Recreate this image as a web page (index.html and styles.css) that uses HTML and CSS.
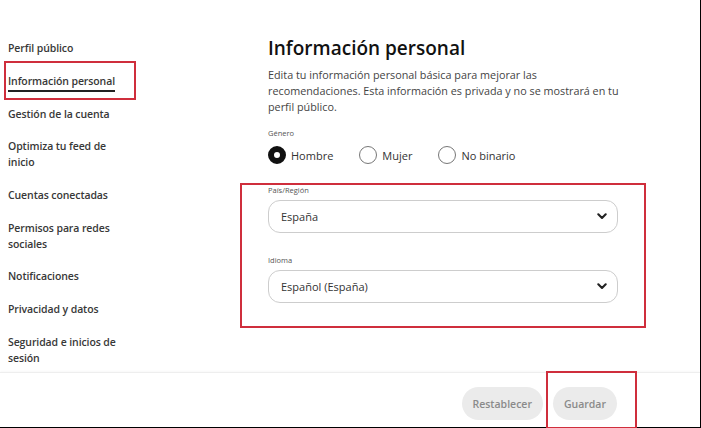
FILE: index.html
```html
<!DOCTYPE html>
<html lang="es">
<head>
<meta charset="utf-8">
<title>Información personal</title>
<link rel="stylesheet" href="styles.css">
</head>
<body>
<div class="page">
  <div class="top">
    <nav class="sidebar">
      <a class="nav-item">Perfil público</a>
      <a class="nav-item active"><span>Información personal</span></a>
      <a class="nav-item">Gestión de la cuenta</a>
      <a class="nav-item">Optimiza tu feed de inicio</a>
      <a class="nav-item">Cuentas conectadas</a>
      <a class="nav-item">Permisos para redes sociales</a>
      <a class="nav-item">Notificaciones</a>
      <a class="nav-item">Privacidad y datos</a>
      <a class="nav-item">Seguridad e inicios de sesión</a>
    </nav>
    <main class="content">
      <h1 class="title">Información personal</h1>
      <p class="intro">Edita tu información personal básica para mejorar las<br>recomendaciones. Esta información es privada y no se mostrará en tu<br>perfil público.</p>
      <div class="field-label">Género</div>
      <div class="radios">
        <label class="radio"><span class="dot checked"></span>Hombre</label>
        <label class="radio"><span class="dot"></span>Mujer</label>
        <label class="radio"><span class="dot"></span>No binario</label>
      </div>
      <div class="selects">
        <div class="field-label sel-label">País/Región</div>
        <div class="select">
          <span>España</span>
          <svg class="chev" width="10" height="7" viewBox="0 0 10 7"><path d="M1.3 1.3 L5 5 L8.7 1.3" fill="none" stroke="#222" stroke-width="2.1" stroke-linecap="round" stroke-linejoin="round"/></svg>
        </div>
        <div class="field-label sel-label second">Idioma</div>
        <div class="select">
          <span>Español (España)</span>
          <svg class="chev" width="10" height="7" viewBox="0 0 10 7"><path d="M1.3 1.3 L5 5 L8.7 1.3" fill="none" stroke="#222" stroke-width="2.1" stroke-linecap="round" stroke-linejoin="round"/></svg>
        </div>
      </div>
    </main>
  </div>
  <footer class="footer">
    <button class="btn">Restablecer</button>
    <button class="btn">Guardar</button>
  </footer>
  <div class="mark mark-nav"></div>
  <div class="mark mark-selects"></div>
  <div class="mark mark-save"></div>
</div>
</body>
</html>
```

FILE: styles.css
```css
* { box-sizing: border-box; }
html, body { margin: 0; padding: 0; background: #fff; }
body {
  font-family: "Open Sans", "Noto Sans", sans-serif;
  color: #333;
  width: 701px;
  height: 428px;
  overflow: hidden;
}
.page {
  position: relative;
  width: 701px;
  height: 428px;
  border-right: 1px solid #000;
  border-bottom: 1px solid #000;
}
.top {
  display: flex;
  height: 372px;
}
.sidebar {
  width: 268px;
  padding: 32px 0 0 8px;
  display: flex;
  flex-direction: column;
}
.nav-item {
  display: block;
  width: 118px;
  font-size: 10.5px;
  line-height: 16px;
  padding: 8.35px 0;
  color: #383838;
  font-weight: 600;
  letter-spacing: -0.1px;
}
.nav-item.active span {
  border-bottom: 2px solid #222;
  padding-bottom: 2px;
}
.content {
  width: 360px;
  padding-top: 36px;
}
.title {
  margin: 0;
  font-size: 19px;
  line-height: 24px;
  font-weight: 600;
  color: #111;
}
.intro {
  margin: 7px 0 0;
  font-size: 10.8px;
  line-height: 16px;
  color: #444;
  white-space: nowrap;
}
.field-label {
  font-size: 7.5px;
  line-height: 10px;
  color: #555;
  margin-top: 13px;
}
.radios {
  display: flex;
  align-items: center;
  margin-top: 8px;
  height: 18px;
}
.radio {
  display: flex;
  align-items: center;
  font-size: 11px;
  color: #333;
  margin-right: 26px;
}
.radio .dot {
  width: 18px;
  height: 18px;
  border-radius: 50%;
  border: 1.5px solid #777;
  margin-right: 5px;
  background: #fff;
}
.radio .dot.checked {
  border: 6px solid #111;
}
.selects {
  margin-top: 21px;
}
.sel-label { margin-top: 0; }
.sel-label.second { margin-top: 22px; }
.select {
  margin-top: 5px;
  width: 350px;
  height: 33px;
  border: 1px solid #cdcdcd;
  border-radius: 12px;
  display: flex;
  align-items: center;
  justify-content: space-between;
  padding: 0 10px 0 12px;
  font-size: 11px;
  color: #333;
}
.chev { display: block; }
.footer {
  height: 55px;
  border-top: 1px solid #eee;
  box-shadow: 0 -1px 2px rgba(0,0,0,0.03);
  display: flex;
  justify-content: flex-end;
  align-items: flex-start;
  gap: 10px;
  padding: 14px 83px 0 0;
}
.btn {
  height: 33px;
  border: none;
  border-radius: 17px;
  background: #ebebeb;
  color: #8a8a8a;
  font-family: "Open Sans", "Noto Sans", sans-serif;
  font-weight: 600;
  font-size: 10.5px;
  padding: 0 11px;
}
.mark {
  position: absolute;
  border: 2px solid #cf2e3c;
  pointer-events: none;
}
.mark-nav { left: 4px; top: 61px; width: 132px; height: 39px; }
.mark-selects { left: 240px; top: 183px; width: 406px; height: 145px; }
.mark-save { left: 546px; top: 371px; width: 91px; height: 58px; }
```
